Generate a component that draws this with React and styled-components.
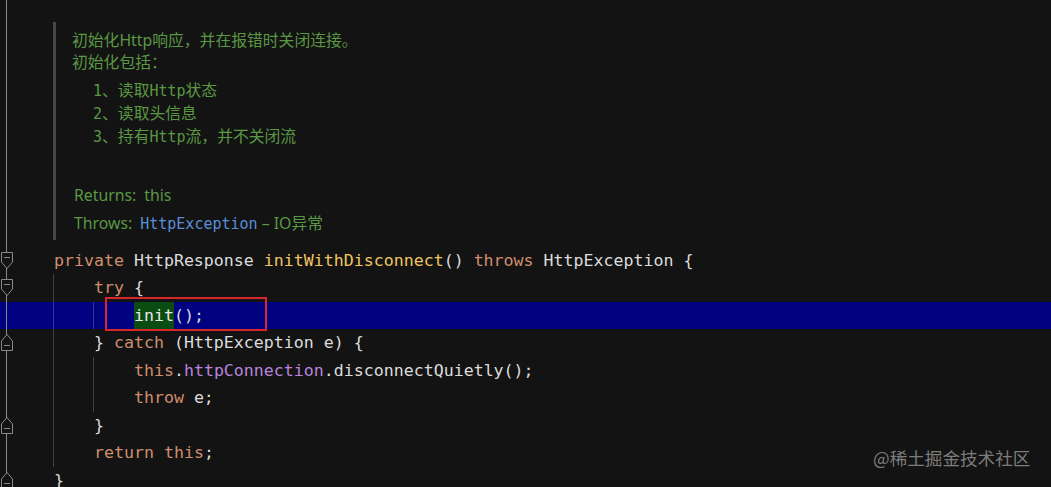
import React from "react";
import styled, { createGlobalStyle } from "styled-components";

const GlobalStyle = createGlobalStyle`
  html, body {
    margin: 0;
    padding: 0;
    background: #131313;
  }
`;

const MONO = `"DejaVu Sans Mono", "Liberation Mono", monospace`;
const SANS = `"Noto Sans", "Noto Sans CJK SC", sans-serif`;

const Editor = styled.div`
  position: relative;
  width: 1051px;
  height: 487px;
  overflow: hidden;
  background: #131313;
  display: flex;
  flex-direction: column;
`;

const Row = styled.div`
  display: flex;
  align-items: stretch;
  background: ${(p) => (p.$current ? "#000080" : "transparent")};
`;

const Gutter = styled.div`
  position: relative;
  width: 15px;
  flex: none;
  display: flex;
  align-items: center;
  background: linear-gradient(
    to right,
    transparent 6px,
    #8a8a8a 6px,
    #8a8a8a 7px,
    transparent 7px
  );
`;

const DocSection = styled.div`
  flex: 1;
  padding: 22px 0 6.5px 0;
`;

const DocBody = styled.div`
  margin-left: 38px;
  border-left: 3px solid #474747;
  padding: 7px 0 3px 16px;
  font-family: ${SANS};
  font-size: 15.8px;
  color: #5a9843;
`;

const DocLine = styled.div`
  height: ${(p) => p.$h || 22}px;
  line-height: ${(p) => p.$h || 22}px;
  white-space: pre;
`;

const DocList = styled.div`
  margin: 5.5px 0 33.5px 21px;
`;

const Mono = styled.span`
  font-family: ${MONO};
  font-size: 15px;
  color: ${(p) => p.$color || "inherit"};
`;

const Tag = styled.span`
  margin-left: 2px;
  margin-right: 8px;
`;

const Code = styled.div`
  position: relative;
  flex: 1;
  height: 27.5px;
  line-height: 27.5px;
  padding-left: 39px;
  font-family: ${MONO};
  font-size: 16.6px;
  white-space: pre;
  color: #dcdcdc;
  background: ${(p) =>
    (p.$guides || [])
      .map((c) => {
        const x = 38 + c * 10;
        return `linear-gradient(to right, transparent ${x}px, rgba(255,255,255,0.2) ${x}px, rgba(255,255,255,0.2) ${x + 1}px, transparent ${x + 1}px)`;
      })
      .join(", ") || "none"};
`;

const COLORS = {
  kw: "#cf8e6d",
  fn: "#f0c462",
  field: "#b884dd",
  plain: "#dcdcdc",
};

const Tok = styled.span`
  color: ${(p) => COLORS[p.$k] || COLORS.plain};
`;

const Usage = styled.span`
  display: inline-block;
  height: 27.5px;
  background: #0a4c12;
  color: #e8e8e8;
`;

const Marked = styled.div`
  position: absolute;
  left: 90px;
  top: -4.5px;
  width: 158px;
  height: 30px;
  border: 2px solid #d8262a;
`;

const Watermark = styled.div`
  position: absolute;
  left: 873px;
  top: 445px;
  font-family: "Noto Sans CJK SC", "Noto Sans", sans-serif;
  font-size: 17.6px;
  line-height: 26px;
  color: #7c7c7c;
`;

const FoldStart = () => (
  <svg width="12" height="17" viewBox="0 0 12 17" style={{ marginLeft: 1 }}>
    <path d="M0.5 0.5 H11.5 V10 L6 16.5 L0.5 10 Z" fill="#131313" stroke="#8a8a8a" />
    <path d="M3 5.5 H9" stroke="#8a8a8a" />
  </svg>
);

const FoldEnd = () => (
  <svg width="12" height="17" viewBox="0 0 12 17" style={{ marginLeft: 1 }}>
    <path d="M0.5 16.5 H11.5 V7 L6 0.5 L0.5 7 Z" fill="#131313" stroke="#8a8a8a" />
    <path d="M3 11.5 H9" stroke="#8a8a8a" />
  </svg>
);

const lines = [
  {
    fold: "start",
    guides: [],
    body: (
      <>
        <Tok $k="kw">private</Tok> HttpResponse <Tok $k="fn">initWithDisconnect</Tok>(){" "}
        <Tok $k="kw">throws</Tok> HttpException {"{"}
      </>
    ),
  },
  {
    fold: "start",
    guides: [0],
    body: (
      <>
        {"    "}
        <Tok $k="kw">try</Tok> {"{"}
      </>
    ),
  },
  {
    current: true,
    guides: [0, 4],
    body: (
      <>
        {"        "}
        <Usage>init</Usage>();
      </>
    ),
    marked: true,
  },
  {
    fold: "end",
    guides: [0],
    body: (
      <>
        {"    } "}
        <Tok $k="kw">catch</Tok> (HttpException e) {"{"}
      </>
    ),
  },
  {
    guides: [0, 4],
    body: (
      <>
        {"        "}
        <Tok $k="kw">this</Tok>.<Tok $k="field">httpConnection</Tok>.disconnectQuietly();
      </>
    ),
  },
  {
    guides: [0, 4],
    body: (
      <>
        {"        "}
        <Tok $k="kw">throw</Tok> e;
      </>
    ),
  },
  { fold: "end", guides: [0], body: <>{"    }"}</> },
  {
    guides: [0],
    body: (
      <>
        {"    "}
        <Tok $k="kw">return</Tok> <Tok $k="kw">this</Tok>;
      </>
    ),
  },
  { fold: "end", guides: [], body: <>{"}"}</> },
];

export default function App() {
  return (
    <>
      <GlobalStyle />
      <Editor>
        <Row>
          <Gutter />
          <DocSection>
            <DocBody>
              <DocLine>初始化Http响应，并在报错时关闭连接。</DocLine>
              <DocLine>初始化包括：</DocLine>
              <DocList>
                <DocLine $h={23}>
                  <Mono>1</Mono>、读取<Mono>Http</Mono>状态
                </DocLine>
                <DocLine $h={23}>
                  <Mono>2</Mono>、读取头信息
                </DocLine>
                <DocLine $h={23}>
                  <Mono>3</Mono>、持有<Mono>Http</Mono>流，并不关闭流
                </DocLine>
              </DocList>
              <DocLine $h={28}>
                <Tag>Returns:</Tag>this
              </DocLine>
              <DocLine $h={28}>
                <Tag>Throws:</Tag>
                <Mono $color="#5b8ed8">HttpException</Mono> – IO异常
              </DocLine>
            </DocBody>
          </DocSection>
        </Row>
        {lines.map((l, i) => (
          <Row key={i} $current={l.current}>
            <Gutter>
              {l.fold === "start" && <FoldStart />}
              {l.fold === "end" && <FoldEnd />}
            </Gutter>
            <Code $guides={l.guides}>
              {l.body}
              {l.marked && <Marked />}
            </Code>
          </Row>
        ))}
        <Watermark>@稀土掘金技术社区</Watermark>
      </Editor>
    </>
  );
}
